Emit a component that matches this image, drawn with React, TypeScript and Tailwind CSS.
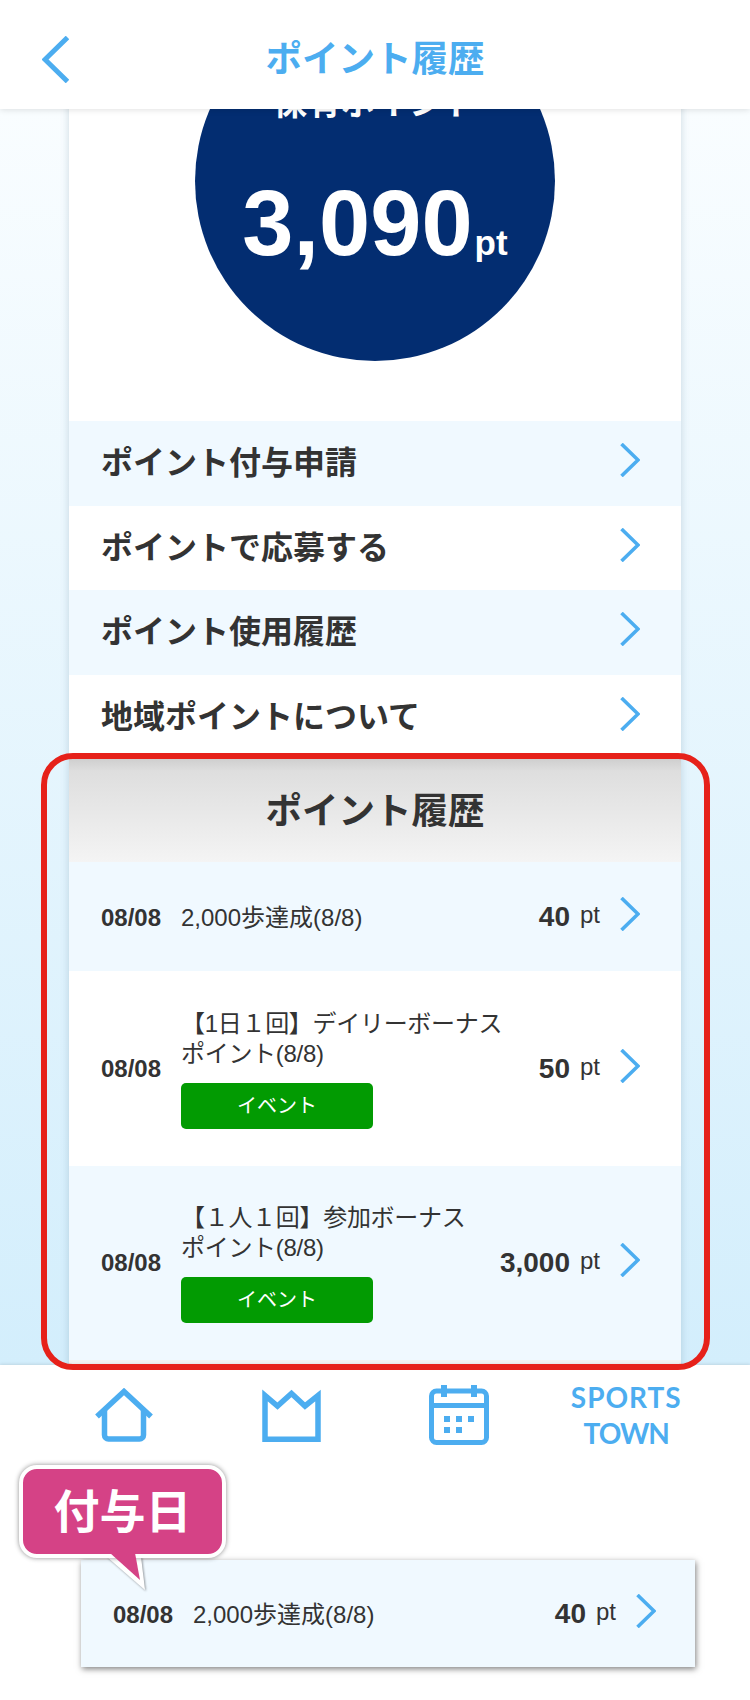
const BLUE = "#4cadf0";

const Chevron = ({ className = "" }: { className?: string }) => (
  <svg viewBox="0 0 20 34" className={`w-[20px] h-[34px] shrink-0 ${className}`} fill="none" stroke={BLUE} strokeWidth="3.6">
    <polyline points="1.5,1 18,17 1.5,33" />
  </svg>
);

const menuItems = ["ポイント付与申請", "ポイントで応募する", "ポイント使用履歴", "地域ポイントについて"];

const historyItems = [
  { title: "2,000歩達成(8/8)", points: "40", event: false },
  { title: "【1日１回】デイリーボーナス\nポイント(8/8)", points: "50", event: true },
  { title: "【１人１回】参加ボーナス\nポイント(8/8)", points: "3,000", event: true },
];

const HistoryRow = ({ title, points, event, className }: { title: string; points: string; event: boolean; className: string }) => (
  <div className={`flex items-center text-[#333] ${className}`}>
    <span className={`w-[60px] shrink-0 text-[24px] font-bold ${event ? "" : "translate-y-[1px]"}`}>08/08</span>
    <div className="ml-[20px] w-[290px] shrink-0">
      <p className={`text-[24px] leading-[30px] text-[#333] whitespace-pre ${event ? "tracking-[-0.3px]" : "translate-y-[1px]"}`}>{title}</p>
      {event && (
        <div className="mt-[14px] w-[192px] h-[46px] rounded-[5px] bg-[#029b02] text-white text-[20px] flex items-center justify-center">
          イベント
        </div>
      )}
    </div>
    <div className="ml-auto flex items-baseline">
      <span className="text-[28px] font-bold">{points}</span>
      <span className="ml-[10px] text-[24px] -translate-y-[3px]">pt</span>
    </div>
    <Chevron className="ml-[20px] -translate-y-[3px]" />
  </div>
);

const NavIcons = () => (
  <div className="grid grid-cols-4 px-[40px] pt-[10px] h-[90px] justify-items-center items-center">
    <svg viewBox="0 0 58 54" className="w-[58px] h-[54px]" fill="none" stroke={BLUE} strokeWidth="5.5">
      <path d="M2 28.5 29 3.5 56 28.5" />
      <path d="M9.5 22V47a4 4 0 0 0 4 4h31a4 4 0 0 0 4-4V22" />
    </svg>
    <svg viewBox="0 0 59 53" className="w-[59px] h-[53px]" fill="none" stroke={BLUE} strokeWidth="5.5">
      <path d="M3 50.25V6.5L15.5 17 29.5 4.5 43 17 56 6.5V50.25Z" />
    </svg>
    <svg viewBox="0 0 60 60" className="w-[60px] h-[60px]" fill={BLUE}>
      <rect x="2.5" y="6" width="55" height="51.5" rx="5" fill="none" stroke={BLUE} strokeWidth="5" />
      <rect x="2" y="18" width="56" height="5" />
      <rect x="12" y="0" width="6" height="12" />
      <rect x="42" y="0" width="6" height="12" />
      <rect x="15" y="31" width="6" height="6" />
      <rect x="27" y="31" width="6" height="6" />
      <rect x="39" y="31" width="6" height="6" />
      <rect x="15" y="42" width="6" height="6" />
      <rect x="27" y="42" width="6" height="6" />
    </svg>
    <div className="text-center text-[#4cadf0] text-[28px] leading-[36px] font-bold font-['Lato',sans-serif]">
      <div className="tracking-[1px]">SPORTS</div>
      <div className="tracking-[-1px]">TOWN</div>
    </div>
  </div>
);

const App = () => {
  return (
    <div className="relative w-[750px] h-[1700px] overflow-hidden bg-white font-['Liberation_Sans','Noto_Sans_CJK_JP',sans-serif]">
      <header className="relative z-10 h-[109px] bg-white shadow-[0_1px_6px_rgba(0,0,0,0.12)] grid grid-cols-[1fr_auto_1fr] items-center pt-[10px] pl-[42px]">
        <svg viewBox="0 0 27 47" className="w-[27px] h-[47px]" fill="none" stroke={BLUE} strokeWidth="5">
          <polyline points="25.5,1.5 3,23.5 25.5,45.5" />
        </svg>
        <h1 className="-ml-[42px] translate-y-[1px] text-[36.5px] font-bold text-[#4cadf0]">ポイント履歴</h1>
      </header>

      <main className="h-[1256px] overflow-hidden bg-[linear-gradient(#f9fdff,#d3eefc)]">
        <div className="mx-auto w-[612px] -mt-[108px] bg-white shadow-[0_0_8px_rgba(70,110,140,0.25)]">
          <div className="mx-auto w-[360px] h-[360px] rounded-full bg-[#032d71] text-white flex flex-col items-center pt-[82px]">
            <span className="text-[34px] leading-[40px] font-bold">保有ポイント</span>
            <div className="mt-[54px] flex items-baseline leading-none">
              <span className="text-[92px] font-bold">3,090</span>
              <span className="ml-[2px] text-[35px] font-bold">pt</span>
            </div>
          </div>

          <div className="mt-[60px]">
            {menuItems.map((item, index) => (
              <div
                key={index}
                className={`h-[84.5px] pl-[32px] pr-[41px] flex items-center justify-between ${index % 2 === 0 ? "bg-[#f0f9ff]" : "bg-white"}`}
              >
                <span className="text-[32px] font-bold text-[#333]">{item}</span>
                <Chevron className="-translate-y-[3px]" />
              </div>
            ))}
          </div>

          <h2 className="h-[103px] pt-[4px] flex items-center justify-center text-[36.5px] font-bold text-[#333] bg-[linear-gradient(#cfcfcf_0,#dedede_12px,#f4f4f4_100%)]">
            ポイント履歴
          </h2>

          <HistoryRow {...historyItems[0]} className="h-[109px] pl-[32px] pr-[41px] bg-[#f0f9ff]" />
          <HistoryRow {...historyItems[1]} className="h-[195px] pl-[32px] pr-[41px] bg-white" />
          <HistoryRow {...historyItems[2]} className="h-[194px] pl-[32px] pr-[41px] bg-[#f0f9ff]" />
          <div className="h-[10px] bg-[#f2f2f2]" />
        </div>
      </main>

      <footer className="relative z-10 bg-white shadow-[0_-1px_3px_rgba(0,0,0,0.1)] h-[335px]">
        <NavIcons />
        <HistoryRow
          {...historyItems[0]}
          className="mt-[105px] ml-[81px] w-[614px] h-[107px] pl-[32px] pr-[39px] bg-[#f0f9ff] shadow-[1px_2px_6px_rgba(0,0,0,0.5)]"
        />
      </footer>

      {/* red highlight frame */}
      <div className="absolute z-20 left-[41px] top-[753px] w-[669px] h-[617px] border-[6px] border-[#e6211a] rounded-[32px]" />

      {/* callout */}
      <svg viewBox="0 0 40 40" className="absolute z-20 left-[107px] top-[1553px] w-[40px] h-[40px] drop-shadow-[1px_1px_1px_rgba(0,0,0,0.4)]">
        <path d="M0 4 38 37 34 4Z" fill="#fff" />
      </svg>
      <div className="absolute z-20 left-[19px] top-[1465px] w-[207px] h-[93px] rounded-[18px] border-[4px] border-white bg-[#d54286] shadow-[0_0_5px_rgba(0,0,0,0.45)] flex items-center justify-center text-white text-[46px] font-bold leading-none">
        付与日
      </div>
      <svg viewBox="0 0 40 40" className="absolute z-20 left-[107px] top-[1553px] w-[40px] h-[40px]">
        <path d="M3 0H28L33 27Z" fill="#d54286" />
      </svg>
    </div>
  );
};

export default App;
